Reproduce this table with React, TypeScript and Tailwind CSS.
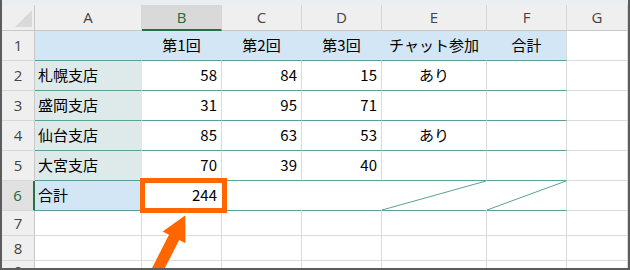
import React from "react";

const COLS = ["A", "B", "C", "D", "E", "F", "G"];

const DATA: string[][] = [
  ["", "第1回", "第2回", "第3回", "チャット参加", "合計", ""],
  ["札幌支店", "58", "84", "15", "あり", "", ""],
  ["盛岡支店", "31", "95", "71", "", "", ""],
  ["仙台支店", "85", "63", "53", "あり", "", ""],
  ["大宮支店", "70", "39", "40", "", "", ""],
  ["合計", "244", "", "", "", "", ""],
  ["", "", "", "", "", "", ""],
  ["", "", "", "", "", "", ""],
  ["", "", "", "", "", "", ""],
];

function cellClass(r: number, c: number) {
  const inTable = r <= 6 && c <= 5;
  let bg = "bg-white";
  if ((r === 1 && c <= 5) || (r === 6 && c === 0)) bg = "bg-[#d3e6f5]";
  else if (r >= 2 && r <= 5 && c === 0) bg = "bg-[#deeaea]";

  let bb = "border-b border-b-[#dadada]";
  if (inTable) bb = "border-b border-b-[#5aa096]";
  if (r === 9) bb = "";

  let br = "border-r border-r-[#dadada]";
  if (r === 1 && c < 5) br = "border-r border-r-[#d3e6f5]";
  else if (r >= 2 && r <= 5 && c === 0) br = "border-r border-r-[#deeaea]";
  else if (r === 6 && c === 0) br = "border-r border-r-[#d3e6f5]";
  else if (r === 6 && c >= 1 && c <= 4) br = "border-r border-r-white";

  let align = "justify-end pr-[4px]";
  if (c === 0) align = "justify-start pl-[3px]";
  if (r === 1 || c === 4) align = "justify-center";

  return `relative flex items-center ${bg} ${bb} ${br} ${align}`;
}

function Diagonal() {
  return (
    <svg className="absolute inset-0 h-full w-full" viewBox="0 0 100 100" preserveAspectRatio="none">
      <line x1="0" y1="100" x2="100" y2="0" stroke="#5aa096" strokeWidth="1" vectorEffect="non-scaling-stroke" />
    </svg>
  );
}

export default function App() {
  const rowHeights = [30, 30, 30, 30, 30, 30, 25, 25, 7];
  return (
    <div
      className="relative box-border h-[270px] w-[630px] overflow-hidden border-x-2 border-b-2 border-[#5c5c5c] bg-white text-[15px] text-black"
      style={{ fontFamily: '"Noto Sans CJK JP", "Noto Sans", sans-serif' }}
    >
      <div className="h-[5px] bg-[#e9eef3]" />
      <div className="grid grid-cols-[33px_107px_80px_80px_80px_105px_80px_1fr]">
        {/* column headers */}
        <div className="relative box-border h-[26px] border-b border-r border-b-[#c8c8c8] border-r-[#c8c8c8] bg-[#efefef]">
          <svg className="absolute left-[12px] top-[5px]" width="18" height="18" viewBox="0 0 18 18">
            <polygon points="18,0 18,17 1,17" fill="#d9d9d9" />
          </svg>
        </div>
        {COLS.map((col, i) => (
          <div
            key={col}
            className={`box-border flex h-[26px] items-center justify-center border-r border-r-[#d5d5d5] ${
              i === 1
                ? "border-b-2 border-b-[#217346] bg-[#d9d9d9] text-[#1e6b40]"
                : "border-b border-b-[#c8c8c8] bg-[#efefef] text-[#444444]"
            }`}
            style={{ fontFamily: '"Open Sans", "Liberation Sans", sans-serif' }}
          >
            {col}
          </div>
        ))}

        {/* rows */}
        {DATA.map((row, ri) => {
          const r = ri + 1;
          const h = rowHeights[ri];
          const selected = r === 6;
          return (
            <React.Fragment key={r}>
              <div
                className={`box-border flex justify-center overflow-hidden ${
                  r === 9 ? "items-start pt-[2px] leading-[16px]" : "items-center border-b border-b-[#d8d8d8]"
                } ${
                  selected
                    ? "border-r-2 border-r-[#217346] bg-[#e1e1e1] text-[#1e6b40]"
                    : "border-r border-r-[#c8c8c8] bg-[#efefef] text-[#444444]"
                }`}
                style={{ height: h, fontFamily: '"Open Sans", "Liberation Sans", sans-serif' }}
              >
                {r}
              </div>
              {row.map((text, c) => (
                <div key={c} className={`box-border ${cellClass(r, c)}`} style={{ height: h }}>
                  {r === 6 && (c === 4 || c === 5) ? <Diagonal /> : null}
                  {text}
                </div>
              ))}
            </React.Fragment>
          );
        })}
      </div>

      {/* highlight box on B6 */}
      <div className="absolute left-[138px] top-[178px] box-border h-[35px] w-[87px] border-[5px] border-[#ff6600]" />

      {/* arrow */}
      <svg className="pointer-events-none absolute left-0 top-0" width="630" height="270" viewBox="0 0 630 270">
        <g transform="translate(184 214) rotate(27)">
          <polygon
            points="0,0 14,27 6.5,27 6.5,75 -6.5,75 -6.5,27 -14,27"
            fill="#ff6600"
            stroke="#ffffff"
            strokeWidth="1.5"
            strokeLinejoin="miter"
          />
        </g>
      </svg>
    </div>
  );
}
